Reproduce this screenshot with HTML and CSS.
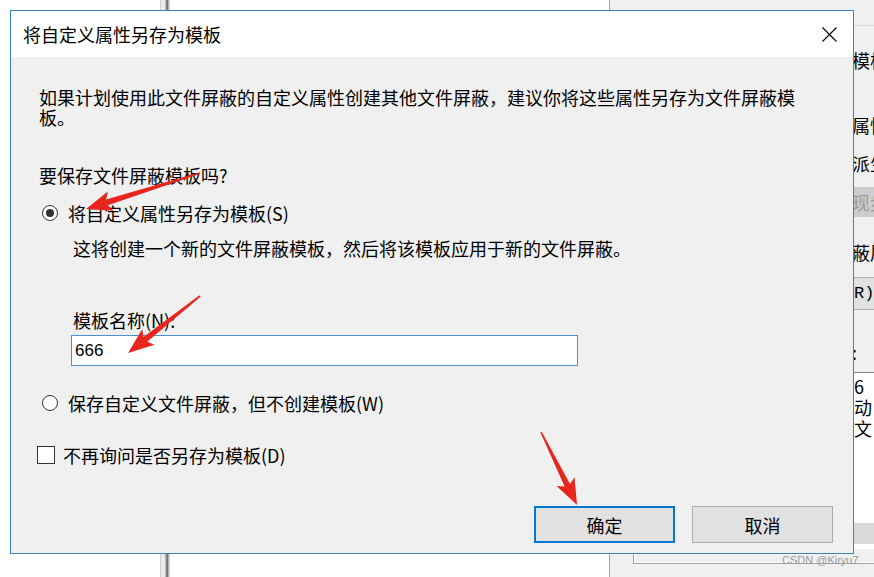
FILE: index.html
```html
<!DOCTYPE html>
<html lang="zh-CN">
<head>
<meta charset="utf-8">
<title>将自定义属性另存为模板</title>
<link rel="stylesheet" href="styles.css">
</head>
<body>
<div class="desktop">
  <div class="left-pane"><div class="splitter"></div></div>
  <div class="right-pane">
    <div class="rp-tabline"></div>
    <div class="rp-line rp-top">模板</div>
    <div class="rp-line rp-attr">属性</div>
    <div class="rp-line rp-derive">派生</div>
    <div class="rp-btn rp-disabled">现步</div>
    <div class="rp-line rp-screen">蔽属</div>
    <div class="rp-btn rp-r">R)</div>
    <div class="rp-line rp-colon">:</div>
    <div class="rp-box">
      <div class="rp-box-text">6</div>
      <div class="rp-box-text">动</div>
      <div class="rp-box-text">文</div>
      <div class="rp-box-bar"></div>
    </div>
    <div class="rp-groove"></div>
  </div>
</div>

<div class="dialog">
  <div class="titlebar">
    <span class="title">将自定义属性另存为模板</span>
    <svg class="close" width="15" height="15" viewBox="0 0 15 15"><path d="M0.5 0.5 L14.5 14.5 M14.5 0.5 L0.5 14.5" stroke="#000" stroke-width="1.1" fill="none"/></svg>
  </div>
  <div class="dlg-body">
    <p class="intro">如果计划使用此文件屏蔽的自定义属性创建其他文件屏蔽，建议你将这些属性另存为文件屏蔽模板。</p>
    <p class="question">要保存文件屏蔽模板吗?</p>
    <div class="radio-row"><span class="radio checked"></span><span>将自定义属性另存为模板(S)</span></div>
    <p class="desc">这将创建一个新的文件屏蔽模板，然后将该模板应用于新的文件屏蔽。</p>
    <p class="name-label">模板名称(N):</p>
    <div class="name-input">666</div>
    <div class="radio-row r2"><span class="radio"></span><span>保存自定义文件屏蔽，但不创建模板(W)</span></div>
    <div class="check-row"><span class="checkbox"></span><span>不再询问是否另存为模板(D)</span></div>
    <div class="buttons">
      <button class="btn primary">确定</button>
      <button class="btn">取消</button>
    </div>
  </div>
</div>

<svg class="arrows" width="874" height="577" viewBox="0 0 874 577">
  <g fill="#e8261e">
    <polygon transform="translate(200 173) rotate(162.5)" points="0,-0.8 97.5,-3 93.5,-10 119.5,0 93.5,10 97.5,3 0,0.8"/>
    <polygon transform="translate(200 296) rotate(141.6)" points="0,-0.8 69.8,-3 65.8,-10 91.8,0 65.8,10 69.8,3 0,0.8"/>
    <polygon transform="translate(541 432) rotate(63.7)" points="0,-0.8 59.4,-3 55.4,-10 81.4,0 55.4,10 59.4,3 0,0.8"/>
  </g>
</svg>

<div class="watermark">CSDN @Kiryu7</div>
</body>
</html>
```

FILE: styles.css
```css
* { box-sizing: border-box; }
html, body { margin: 0; padding: 0; }
body {
  width: 874px;
  height: 577px;
  overflow: hidden;
  position: relative;
  background: #fff;
  font-family: "Noto Sans CJK SC", "Noto Sans", sans-serif;
  color: #000;
}
p { margin: 0; }

/* background windows */
.desktop { display: flex; height: 577px; }
.left-pane { width: 609px; flex: none; background: #fff; }
.splitter {
  margin-left: 160px;
  width: 10px;
  height: 100%;
  background: linear-gradient(to right, #bdbdbd 0, #e8e8e8 1px, #f2f2f2 4px, #b0b0b0 6px, #5e5e5e 7px, #8a8a8a 8px, #d6d6d6 9px);
}
.right-pane {
  flex: 1;
  border-left: 1px solid #a0a0a0;
  background: #f0f0f0;
  font-size: 18px;
  line-height: 20px;
  padding-left: 242px;
  overflow: hidden;
  white-space: nowrap;
}
.rp-tabline { margin-top: 25px; margin-left: -10px; border-top: 1px solid #dcdcdc; }
.rp-top { margin-top: 24px; }
.rp-attr { margin-top: 45px; }
.rp-derive { margin-top: 18px; }
.rp-btn { margin-left: -4px; padding-left: 4px; width: 120px; }
.rp-disabled {
  margin-top: 14px;
  height: 30px;
  line-height: 30px;
  background: #cccccc;
  color: #9a9a9a;
}
.rp-screen { margin-top: 25px; }
.rp-r {
  margin-top: 15px;
  height: 33px;
  line-height: 31px;
  background: #e1e1e1;
  border: 1px solid #adadad;
  font-family: "Liberation Mono", monospace;
  font-size: 17px;
  padding-left: 5px;
}
.rp-colon { margin-top: 32px; }
.rp-box {
  margin-top: 10px;
  margin-left: -10px;
  padding: 3px 0 5px 12px;
  background: #fff;
  border-top: 1px solid #828282;
}
.rp-box-text { height: 21px; line-height: 21px; }
.rp-box-bar { margin-top: 84px; margin-left: -12px; height: 21px; background: #d9d9d9; }
.rp-groove {
  margin-top: 4px;
  margin-left: -219px;
  height: 11px;
  border-left: 1px solid #a0a0a0;
  border-bottom: 1px solid #a0a0a0;
  box-shadow: inset 1px -1px 0 #fff;
}

/* dialog window */
.dialog {
  position: absolute;
  left: 10px;
  top: 10px;
  width: 844px;
  height: 544px;
  border: 1px solid #3a84c6;
  background: #f0f0f0;
  display: flex;
  flex-direction: column;
}
.titlebar {
  height: 46px;
  flex: none;
  background: #fff;
  display: flex;
  align-items: center;
  padding: 0 16px 0 12px;
}
.title { flex: 1; font-size: 18px; }
.close { display: block; }

.dlg-body {
  flex: 1;
  padding: 30px 0 0 28px;
  font-size: 18px;
  line-height: 20px;
}
.intro { width: 760px; }
.question { margin-top: 38px; }
.radio-row {
  display: flex;
  align-items: center;
  gap: 10px;
  margin-top: 18px;
  padding-left: 3px;
  height: 20px;
}
.radio {
  width: 16px;
  height: 16px;
  flex: none;
  border: 1px solid #333;
  border-radius: 50%;
  background: #fff;
  display: flex;
  align-items: center;
  justify-content: center;
}
.radio.checked::after {
  content: "";
  width: 8px;
  height: 8px;
  border-radius: 50%;
  background: #333;
}
.desc { margin-top: 15px; padding-left: 34px; }
.name-label { margin-top: 52px; padding-left: 34px; }
.name-input {
  margin-top: 5px;
  margin-left: 32px;
  width: 507px;
  height: 31px;
  border: 1px solid #4a92d4;
  background: #fff;
  font-family: "Liberation Sans", sans-serif;
  font-size: 17px;
  line-height: 29px;
  padding-left: 3px;
}
.radio-row.r2 { margin-top: 27px; }
.check-row {
  display: flex;
  align-items: center;
  gap: 8px;
  margin-top: 32px;
  margin-left: -2px;
  height: 20px;
}
.checkbox {
  width: 18px;
  height: 18px;
  flex: none;
  border: 1px solid #333;
  background: #fff;
}
.buttons {
  display: flex;
  justify-content: flex-end;
  gap: 17px;
  margin-top: 41px;
  padding-right: 20px;
}
.btn {
  width: 141px;
  height: 37px;
  padding: 0;
  background: #e1e1e1;
  border: 1px solid #adadad;
  font-family: inherit;
  font-size: 18px;
  color: #000;
}
.btn.primary { border: 2px solid #0078d7; }

/* annotations */
.arrows { position: absolute; left: 0; top: 0; pointer-events: none; }
.watermark {
  position: absolute;
  left: 782px;
  top: 554px;
  font-family: "Liberation Sans", sans-serif;
  font-size: 11px;
  color: #9a9a9a;
}
```
